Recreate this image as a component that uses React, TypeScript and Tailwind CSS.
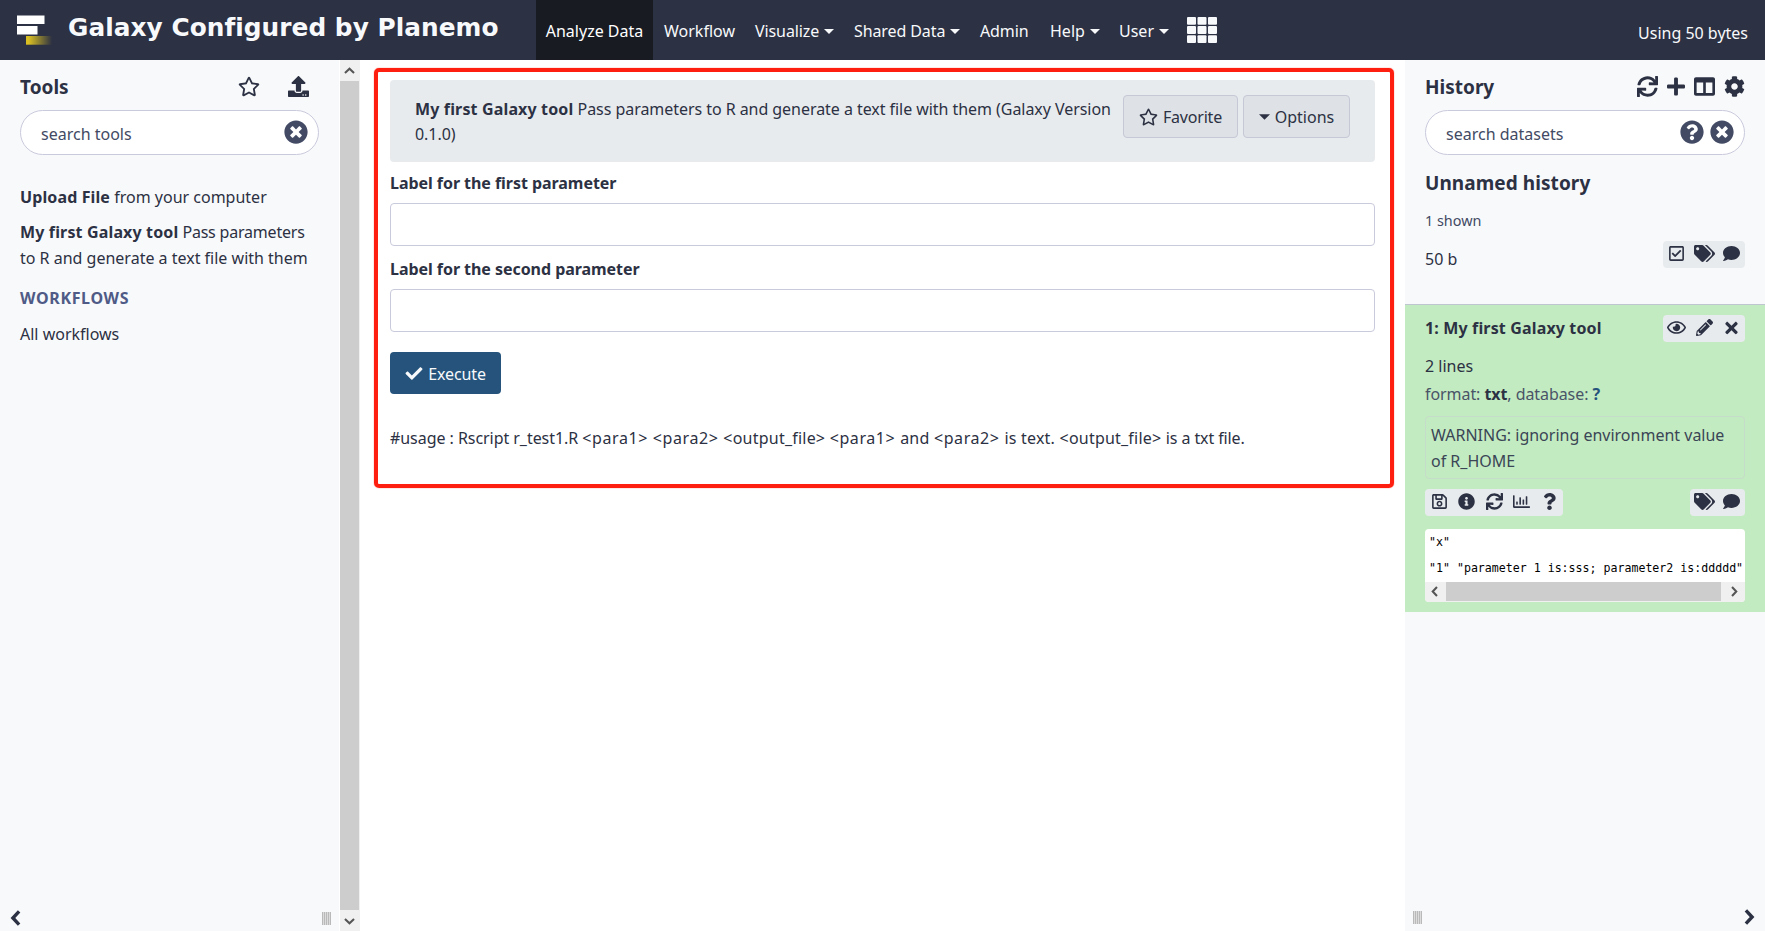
import type { ComponentType, ReactNode } from "react";
import {
  FaCheck,
  FaCog,
  FaColumns,
  FaComment,
  FaInfoCircle,
  FaPencilAlt,
  FaPlus,
  FaQuestion,
  FaQuestionCircle,
  FaRegChartBar,
  FaRegCheckSquare,
  FaRegEye,
  FaRegSave,
  FaRegStar,
  FaSync,
  FaTags,
  FaTimes,
  FaTimesCircle,
  FaUpload,
} from "react-icons/fa";

type IconType = ComponentType<{ className?: string }>;

function Caret({ className = "h-[5px] w-[10px]" }: { className?: string }) {
  return (
    <svg viewBox="0 0 10 5" className={`fill-current ${className}`}>
      <path d="M0 0h10L5 5z" />
    </svg>
  );
}

function NavItem({ label, caret, className }: { label: string; caret?: boolean; className: string }) {
  return (
    <a className={`flex h-full items-center pt-[2px] whitespace-nowrap ${className}`}>
      {label}
      {caret && <Caret className="ml-[5px] h-[5px] w-[10px]" />}
    </a>
  );
}

function Logo() {
  return (
    <svg viewBox="0 0 36 30" className="h-[30px] w-[36px]">
      <defs>
        <linearGradient id="tail" x1="0" x2="1">
          <stop offset="0.1" stopColor="#d9bf22" />
          <stop offset="1" stopColor="#2c3143" />
        </linearGradient>
      </defs>
      <rect x="0" y="0.5" width="27.5" height="8.5" fill="#fff" />
      <rect x="0" y="11" width="20.5" height="8.5" fill="#fff" />
      <rect x="9" y="21" width="26" height="8.7" fill="url(#tail)" />
    </svg>
  );
}

function AppGrid() {
  return (
    <svg viewBox="0 0 30 26" className="h-[26px] w-[30px] fill-[#f8f9fb]">
      {[0, 9.1, 18.2].map((y) =>
        [0, 10.5, 21].map((x) => <rect key={`${x}-${y}`} x={x} y={y} width="9" height="7.8" rx="1" />),
      )}
    </svg>
  );
}

function Header() {
  return (
    <header className="flex h-[60px] shrink-0 items-center bg-[#2c3143] text-[#f8f9fb]">
      <div className="flex h-full w-[536px] items-center pl-[17px]">
        <Logo />
        <h1 className="ml-[15px] pb-[4px] font-['DejaVu_Sans',sans-serif] text-[24.8px] leading-[30px] font-bold tracking-[0.04px] whitespace-nowrap">
          Galaxy Configured by Planemo
        </h1>
      </div>
      <nav className="flex h-full items-center">
        <NavItem label="Analyze Data" className="w-[117px] justify-center bg-[#191b23] text-white" />
        <NavItem label="Workflow" className="ml-[11px] w-[91px]" />
        <NavItem label="Visualize" caret className="w-[99px] tracking-[-0.1px]" />
        <NavItem label="Shared Data" caret className="w-[126px] tracking-[-0.1px]" />
        <NavItem label="Admin" className="w-[70px] tracking-[-0.1px]" />
        <NavItem label="Help" caret className="w-[69px]" />
        <NavItem label="User" caret className="w-[68px]" />
        <AppGrid />
      </nav>
      <div className="mt-[5px] mr-[17px] ml-auto">Using 50 bytes</div>
    </header>
  );
}

function SearchBox({ label, children }: { label: string; children: ReactNode }) {
  return (
    <div className="flex h-[45px] items-center rounded-[22.5px] border border-[#c9cadc] bg-white pr-[10px] pl-[20px] text-[#424a64]">
      <span className="grow pt-[2px]">{label}</span>
      <span className="flex gap-[6px] pb-px">{children}</span>
    </div>
  );
}

function Grip() {
  return (
    <div className="flex h-[13px] w-[9px] gap-px bg-[#dcdcdc]">
      {[0, 1, 2, 3, 4].map((i) => (
        <span key={i} className="w-px bg-[#b9b9b9]" />
      ))}
    </div>
  );
}

function Chevron({ className = "", stroke = 3.4 }: { className?: string; stroke?: number }) {
  return (
    <svg viewBox="0 0 10 16" className={className} fill="none" stroke="currentColor" strokeWidth={stroke}>
      <path d="M8.6 1.4 2.4 8l6.2 6.6" />
    </svg>
  );
}

function ToolPanel() {
  return (
    <aside className="flex w-[339px] shrink-0 flex-col bg-[#f8f9fb]">
      <div className="px-[20px] pt-[4px]">
        <div className="flex h-[46px] items-center">
          <h2 className="grow text-[19px] font-bold">Tools</h2>
          <FaRegStar className="mb-[2px] h-[21px] w-[22px]" />
          <FaUpload className="mr-[10px] mb-[2px] ml-[28px] h-[21px] w-[21px]" />
        </div>
        <SearchBox label="search tools">
          <FaTimesCircle className="h-[24px] w-[24px]" />
        </SearchBox>
        <p className="mt-[29px] whitespace-nowrap">
          <b className="tracking-[0.12px]">Upload File</b> from your computer
        </p>
        <p className="mt-[9px] whitespace-nowrap">
          <b className="tracking-[0.15px]">My first Galaxy tool</b>
          <span className="tracking-[-0.2px]"> Pass parameters</span>
          <br />
          to R and generate a text file with them
        </p>
        <h3 className="mt-[14px] font-bold tracking-[0.65px] text-[#4f5b86]">WORKFLOWS</h3>
        <p className="mt-[10px]">All workflows</p>
      </div>
      <div className="mt-auto flex items-center justify-between pr-[8px] pb-[5px] pl-[10px]">
        <Chevron className="h-[16px] w-[11px]" />
        <Grip />
      </div>
    </aside>
  );
}

function VerticalScrollbar() {
  return (
    <div className="ml-px flex w-[20px] shrink-0 flex-col bg-[#f0f0f0] text-[#555]">
      <span className="flex h-[21px] w-[19px] items-center justify-center">
        <Chevron className="h-[11px] w-[7px] rotate-90" stroke={3} />
      </span>
      <span className="w-[19px] grow bg-[#cdcdcd]" />
      <span className="flex h-[21px] w-[19px] items-center justify-center pt-px">
        <Chevron className="h-[11px] w-[7px] -rotate-90" stroke={3} />
      </span>
    </div>
  );
}

function GrayButton({ children, className }: { children: ReactNode; className: string }) {
  return (
    <button
      className={`flex h-[43px] items-center justify-center rounded-[4px] border border-[#c6c8d6] bg-[#dee1e5] ${className}`}
    >
      {children}
    </button>
  );
}

function Field({ label }: { label: string }) {
  return (
    <div>
      <label className="block leading-[26px] font-bold tracking-[-0.05px]">{label}</label>
      <input className="mt-[7px] block h-[43px] w-full rounded-[4px] border border-[#c9cadc] bg-white" />
    </div>
  );
}

function Param({ children }: { children: ReactNode }) {
  return <span className="tracking-[0.6px]">{children} </span>;
}

function ToolForm() {
  return (
    <main className="relative grow pt-[20px] pr-[30px] pl-[30px]">
      <div className="absolute top-[8px] left-[14px] h-[420px] w-[1019.5px] rounded-[5px] border-4 border-[#ff1f10] shadow-[0_0_1px_#ff1f10]" />
      <section className="flex h-[82px] items-start rounded-[4px] bg-[#e8ebee] pr-[25px] pl-[25px]">
        <p className="w-[708px] pt-[17px] leading-[25px] tracking-[-0.05px]">
          <b className="tracking-[0.15px]">My first Galaxy tool</b> Pass parameters to R and generate a text file with
          them (Galaxy Version 0.1.0)
        </p>
        <div className="mt-[15px] ml-auto flex gap-[5px]">
          <GrayButton className="w-[115px] gap-[5px]">
            <FaRegStar className="h-[18px] w-[19px]" />
            <span className="tracking-[-0.2px]">Favorite</span>
          </GrayButton>
          <GrayButton className="w-[107px] gap-[5px]">
            <Caret className="h-[6px] w-[11px]" />
            <span>Options</span>
          </GrayButton>
        </div>
      </section>
      <form className="mt-[8px] flex flex-col gap-[10px]">
        <Field label="Label for the first parameter" />
        <Field label="Label for the second parameter" />
      </form>
      <button className="mt-[20px] flex h-[42px] w-[111px] items-center justify-center gap-[5px] rounded-[4px] bg-[#25537b] pt-[2px] text-[#f8f9fb]">
        <FaCheck className="mb-px h-[17px] w-[18px]" />
        <span className="tracking-[-0.1px]">Execute</span>
      </button>
      <p className="mt-[31px] tracking-[0.22px] whitespace-nowrap">
        <span className="tracking-[-0.05px]">#usage : Rscript r_test1.R </span>
        <Param>&lt;para1&gt;</Param>
        <Param>&lt;para2&gt;</Param>
        &lt;output_file&gt; <Param>&lt;para1&gt;</Param>
        and <Param>&lt;para2&gt;</Param>
        is text. &lt;output_file&gt; <span className="tracking-[-0.1px]">is a txt file.</span>
      </p>
    </main>
  );
}

function IconGroup({ icons }: { icons: [IconType, string][] }) {
  return (
    <div className="flex h-[27px] shrink-0 rounded-[4px] bg-[#e8ebee]">
      {icons.map(([Icon, size], i) => (
        <span key={i} className="flex w-[27.5px] items-center justify-center pb-[2px] pl-px">
          <Icon className={size} />
        </span>
      ))}
    </div>
  );
}

function Dataset() {
  return (
    <article className="h-[308px] border-t border-[#bfc6cf] bg-[#c3ebc1] px-[20px] pt-[10px]">
      <div className="flex justify-between">
        <h3 className="leading-[26px] font-bold tracking-[0.15px] whitespace-nowrap">1: My first Galaxy tool</h3>
        <IconGroup
          icons={[
            [FaRegEye, "h-[17px] w-[19px]"],
            [FaPencilAlt, "h-[17px] w-[17px]"],
            [FaTimes, "h-[18px] w-[13px]"],
          ]}
        />
      </div>
      <p className="mt-[11px]">2 lines</p>
      <p className="mt-px leading-[28px] tracking-[-0.07px] text-[#4a5468]">
        format: <b className="text-[#2c3143]">txt</b>, database: <b className="text-[#25537b]">?</b>
      </p>
      <p className="mt-[8px] h-[63px] rounded-[4px] border border-[#c6dcca] pt-[5px] pl-[5px] text-[#3a4556]">
        WARNING: ignoring environment value
        <br />
        of R_HOME
      </p>
      <div className="mt-[10px] flex justify-between">
        <IconGroup
          icons={[
            [FaRegSave, "h-[17px] w-[15px]"],
            [FaInfoCircle, "h-[17px] w-[17px]"],
            [FaSync, "h-[17px] w-[17px]"],
            [FaRegChartBar, "h-[17px] w-[17px]"],
            [FaQuestion, "h-[17px] w-[13px]"],
          ]}
        />
        <IconGroup
          icons={[
            [FaTags, "h-[17px] w-[21px]"],
            [FaComment, "h-[17px] w-[17px]"],
          ]}
        />
      </div>
      <div className="mt-[13px] overflow-hidden rounded-[4px] bg-white">
        <pre className="h-[53px] pl-[4px] font-['DejaVu_Sans_Mono',monospace] text-[11.6px] leading-[26px] text-black">
          {'"x"\n"1" "parameter 1 is:sss; parameter2 is:ddddd"'}
        </pre>
        <div className="flex h-[20px] items-stretch bg-[#f0f0f0] text-[#555]">
          <span className="flex w-[21px] items-center justify-center pr-[2px] pb-[2px]">
            <Chevron className="h-[11px] w-[7px]" stroke={3} />
          </span>
          <span className="mb-px grow bg-[#cdcdcd]" />
          <span className="flex w-[24px] items-center justify-center pb-[2px] pl-[2px]">
            <Chevron className="h-[11px] w-[7px] rotate-180" stroke={3} />
          </span>
        </div>
      </div>
    </article>
  );
}

function HistoryPanel() {
  return (
    <aside className="flex w-[360px] shrink-0 flex-col bg-[#f8f9fb]">
      <div className="h-[244px] px-[20px] pt-[4px]">
        <div className="flex h-[46px] items-center">
          <h2 className="grow text-[19px] font-bold">History</h2>
          <div className="flex items-center gap-[9px] pb-[2px]">
            <FaSync className="h-[21px] w-[21px]" />
            <FaPlus className="h-[21px] w-[18px]" />
            <FaColumns className="h-[21px] w-[21px]" />
            <FaCog className="h-[21px] w-[21px]" />
          </div>
        </div>
        <SearchBox label="search datasets">
          <FaQuestionCircle className="h-[24px] w-[24px]" />
          <FaTimesCircle className="h-[24px] w-[24px]" />
        </SearchBox>
        <h2 className="mt-[13px] text-[19px] leading-[30px] font-bold tracking-[0.07px]">Unnamed history</h2>
        <p className="mt-[12px] text-[14.4px] leading-[22px] text-[#424a64]">1 shown</p>
        <div className="mt-[9px] flex items-start justify-between">
          <span className="pt-[5px]">50 b</span>
          <IconGroup
            icons={[
              [FaRegCheckSquare, "h-[17px] w-[15px]"],
              [FaTags, "h-[17px] w-[21px]"],
              [FaComment, "h-[17px] w-[17px]"],
            ]}
          />
        </div>
      </div>
      <Dataset />
      <div className="mt-auto flex items-center justify-between pr-[10px] pb-[6px] pl-[8px]">
        <Grip />
        <Chevron className="h-[16px] w-[11px] rotate-180" />
      </div>
    </aside>
  );
}

export default function App() {
  return (
    <div className="flex h-[931px] w-[1765px] flex-col overflow-hidden bg-white font-['Noto_Sans','Open_Sans',sans-serif] text-[16px] leading-[26px] text-[#2c3143]">
      <Header />
      <div className="flex min-h-0 grow">
        <ToolPanel />
        <VerticalScrollbar />
        <ToolForm />
        <HistoryPanel />
      </div>
    </div>
  );
}
